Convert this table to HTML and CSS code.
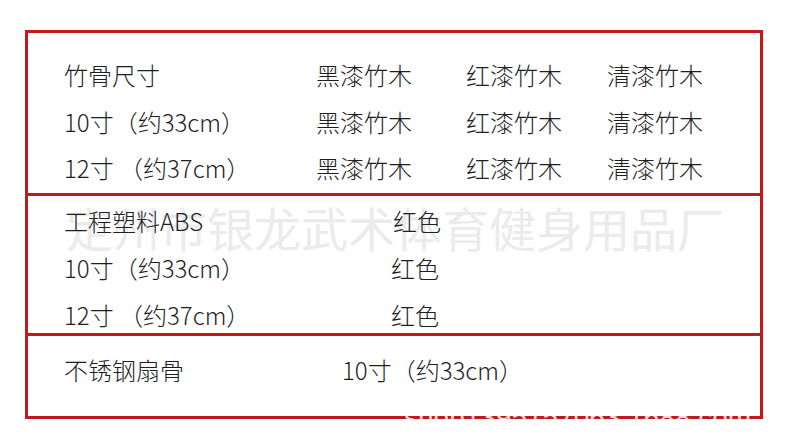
FILE: index.html
```html
<!DOCTYPE html>
<html lang="zh-CN">
<head>
<meta charset="utf-8">
<title>扇骨材质</title>
<link rel="stylesheet" href="styles.css">
</head>
<body>
<div class="page">
  <div class="table">
    <div class="watermark">定州市银龙武术体育健身用品厂</div>
    <section class="sec sec1">
      <div>竹骨尺寸</div><div>黑漆竹木</div><div>红漆竹木</div><div>清漆竹木</div>
      <div>10寸（约33cm）</div><div>黑漆竹木</div><div>红漆竹木</div><div>清漆竹木</div>
      <div>12寸 （约37cm）</div><div>黑漆竹木</div><div>红漆竹木</div><div>清漆竹木</div>
    </section>
    <section class="sec sec2">
      <div>工程塑料ABS</div><div class="nudge">红色</div>
      <div>10寸（约33cm）</div><div>红色</div>
      <div>12寸 （约37cm）</div><div>红色</div>
    </section>
    <section class="sec sec3">
      <div>不锈钢扇骨</div><div>10寸（约33cm）</div>
    </section>
  </div>
  <div class="shopmark">shop1395157063.1688.com</div>
</div>
</body>
</html>
```

FILE: styles.css
```css
html, body {
  margin: 0;
  padding: 0;
  background: #ffffff;
}

.page {
  position: relative;
  width: 790px;
  height: 444px;
  overflow: hidden;
  padding: 30px 0 0 25px;
  box-sizing: border-box;
}

.table {
  position: relative;
  width: 738px;
  height: 389px;
  box-sizing: border-box;
  border: 3px solid #c01a1a;
  font-family: "Noto Sans CJK SC", "Noto Sans", sans-serif;
  font-size: 24px;
  font-weight: 300;
  color: #1e1e1e;
  display: flex;
  flex-direction: column;
}

.watermark {
  position: absolute;
  left: 38px;
  top: 170px;
  font-size: 47px;
  line-height: 47px;
  font-weight: 400;
  color: #ebebeb;
  white-space: nowrap;
  z-index: 0;
}

.sec {
  position: relative;
  z-index: 1;
  display: grid;
  line-height: 30px;
  padding-left: 36px;
  box-sizing: border-box;
  white-space: nowrap;
  align-content: start;
}

.sec1 {
  height: 160px;
  padding-top: 27px;
  grid-template-columns: 252px 150px 141px 1fr;
  row-gap: 16.5px;
}

.sec2 {
  height: 140px;
  border-top: 3px solid #c01a1a;
  padding-top: 10px;
  grid-template-columns: 327px 1fr;
  row-gap: 17px;
}

.sec3 {
  height: 83px;
  border-top: 3px solid #c01a1a;
  padding-top: 19px;
  grid-template-columns: 278px 1fr;
}

.nudge {
  padding-left: 2px;
}

.shopmark {
  position: absolute;
  left: 404px;
  top: 404px;
  font-family: "Liberation Sans", sans-serif;
  font-size: 28px;
  line-height: 28px;
  color: rgba(255, 255, 255, 0.85);
  white-space: nowrap;
  z-index: 2;
}
```
